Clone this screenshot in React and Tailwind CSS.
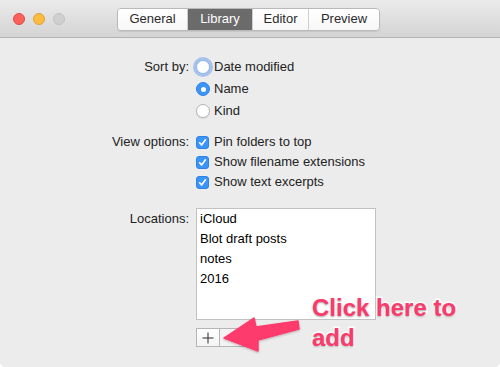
import React from "react";

function Radio({ state }) {
  if (state === "on") {
    return (
      <span className="flex h-[14px] w-[14px] items-center justify-center rounded-full bg-[#3b94f8] border border-[#2f82e6]">
        <span className="h-[5px] w-[5px] rounded-full bg-white" />
      </span>
    );
  }
  if (state === "focus") {
    return (
      <span className="h-[14px] w-[14px] rounded-full bg-white border border-[#8fb6ea] shadow-[0_0_0_3px_rgba(110,160,235,0.55)]" />
    );
  }
  return <span className="h-[14px] w-[14px] rounded-full bg-white border border-[#b3b3b3] shadow-[0_1px_1px_rgba(0,0,0,0.08)]" />;
}

function Check() {
  return (
    <span className="flex h-[13px] w-[13px] items-center justify-center rounded-[3px] bg-[#3b94f8] border border-[#2f82e6]">
      <svg width="9" height="9" viewBox="0 0 9 9">
        <path d="M1.6 4.8 L3.6 6.9 L7.4 1.8" fill="none" stroke="white" strokeWidth="1.6" strokeLinecap="round" strokeLinejoin="round" />
      </svg>
    </span>
  );
}

function Seg({ children, active, last }) {
  return (
    <div
      className={
        "flex h-full items-center justify-center text-[13px] " +
        (active
          ? "bg-[#6b6b6b] text-white"
          : "bg-gradient-to-b from-white to-[#f7f7f7] text-[#2b2b2b]") +
        (last ? "" : " border-r border-[#cfcfcf]")
      }
    >
      {children}
    </div>
  );
}

export default function App() {
  const font = { fontFamily: '"Liberation Sans", Arial, sans-serif' };
  return (
    <div className="relative h-[367px] w-[500px] bg-white" style={font}>
      <div className="flex h-full w-full flex-col overflow-hidden rounded-b-[5px] bg-[#ececec]">
        {/* Title bar */}
        <div className="relative flex h-[38px] shrink-0 items-center border-b border-[#b3b3b3] bg-gradient-to-b from-[#ebebeb] to-[#d4d4d4]">
          <div className="flex items-center gap-[8px] pl-[13px]">
            <span className="h-[12px] w-[12px] rounded-full bg-[#fc605b] border border-[#de4b47]" />
            <span className="h-[12px] w-[12px] rounded-full bg-[#fdbc40] border border-[#dea034]" />
            <span className="h-[12px] w-[12px] rounded-full bg-[#d0d0d0] border border-[#c1c1c1]" />
          </div>
          <div className="ml-[52px] mt-[1px] grid h-[23px] grid-cols-[70px_65px_56px_70px] overflow-hidden rounded-[4px] border border-[#b9b9b9] shadow-[0_1px_1px_rgba(0,0,0,0.08)]">
            <Seg>General</Seg>
            <Seg active>Library</Seg>
            <Seg>Editor</Seg>
            <Seg last>Preview</Seg>
          </div>
        </div>

        {/* Content */}
        <div className="grid grid-cols-[189px_1fr] gap-x-[7px] pt-[18px] text-[13px] text-[#222]">
          {/* Sort by */}
          <div className="flex h-[22px] items-center justify-end">Sort by:</div>
          <div className="flex flex-col">
            <div className="flex h-[22px] items-center gap-[4px]"><Radio state="focus" />Date modified</div>
            <div className="flex h-[22px] items-center gap-[4px]"><Radio state="on" />Name</div>
            <div className="flex h-[22px] items-center gap-[4px]"><Radio state="off" />Kind</div>
          </div>

          {/* View options */}
          <div className="mt-[10px] flex h-[20px] items-center justify-end">View options:</div>
          <div className="mt-[10px] flex flex-col">
            <div className="flex h-[20px] items-center gap-[5px]"><Check />Pin folders to top</div>
            <div className="flex h-[20px] items-center gap-[5px]"><Check />Show filename extensions</div>
            <div className="flex h-[20px] items-center gap-[5px]"><Check />Show text excerpts</div>
          </div>

          {/* Locations */}
          <div className="mt-[16px] flex h-[21px] items-center justify-end">Locations:</div>
          <div className="mt-[16px] flex flex-col">
            <div className="flex h-[112px] w-[180px] flex-col border border-[#c2c2c2] bg-white pl-[3px] text-black">
              <div className="flex h-[20px] items-center">iCloud</div>
              <div className="flex h-[20px] items-center">Blot draft posts</div>
              <div className="flex h-[20px] items-center">notes</div>
              <div className="flex h-[20px] items-center">2016</div>
            </div>
            <div className="mt-[8px] flex h-[19px] w-[50px] border border-[#b5b5b5] bg-[#f3f3f3]">
              <div className="flex w-[23px] items-center justify-center border-r border-[#b5b5b5] bg-gradient-to-b from-white to-[#f4f4f4]">
                <svg width="12" height="12" viewBox="0 0 12 12">
                  <path d="M6 0.5 V11.5 M0.5 6 H11.5" stroke="#2a2a2a" strokeWidth="1" />
                </svg>
              </div>
              <div className="flex-1" />
            </div>
          </div>
        </div>
      </div>

      {/* Annotation arrow */}
      <svg className="pointer-events-none absolute left-0 top-0" width="500" height="367" viewBox="0 0 500 367">
        <defs>
          <filter id="sh" x="-20%" y="-20%" width="140%" height="140%">
            <feDropShadow dx="0" dy="1" stdDeviation="1" floodColor="#000" floodOpacity="0.25" />
          </filter>
        </defs>
        <polygon
          points="224,338 254,318 256,327 298,321 299,329 258,340 258,351"
          fill="#fd3a6c"
          stroke="#fd3a6c"
          strokeWidth="1.5"
          strokeLinejoin="round"
          filter="url(#sh)"
        />
      </svg>

      {/* Annotation text */}
      <div
        className="pointer-events-none absolute left-[312px] top-[293px] text-[24px] font-bold leading-[30px] text-[#fd3a6c] [-webkit-text-stroke:3px_white] [paint-order:stroke_fill] [text-shadow:0_1px_2px_rgba(0,0,0,0.35)]"
        style={{ fontFamily: '"Liberation Sans", Arial, sans-serif' }}
      >
        <div>Click here to</div>
        <div>add</div>
      </div>
    </div>
  );
}
